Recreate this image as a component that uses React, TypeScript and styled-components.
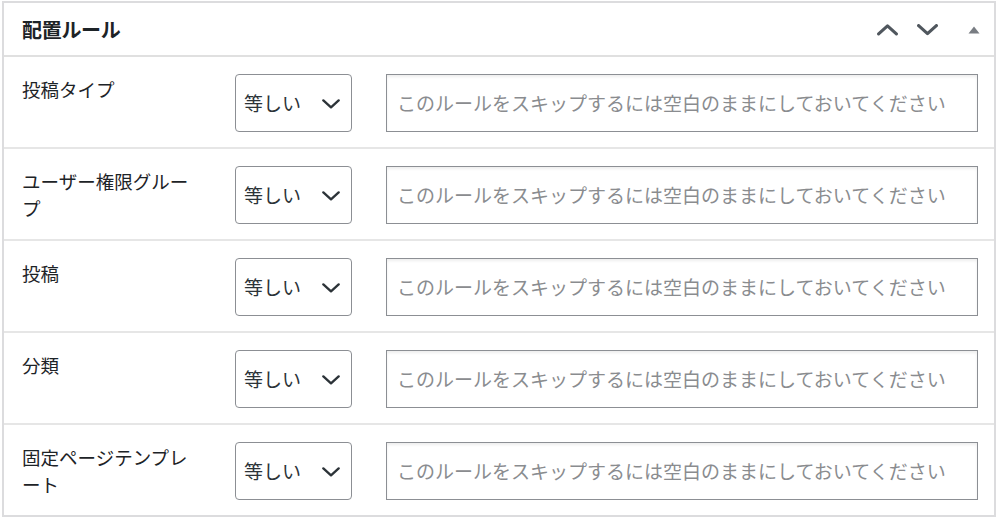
import React from 'react'
import styled, { createGlobalStyle } from 'styled-components'

const rules = [
    '投稿タイプ',
    'ユーザー権限グループ',
    '投稿',
    '分類',
    '固定ページテンプレート',
]

const Global = createGlobalStyle`
    html, body {
        margin: 0;
        padding: 0;
        background: #ffffff;
    }
    body {
        font-family: "Noto Sans CJK JP", "Noto Sans", sans-serif;
        color: #1d2327;
    }
`

const Chevron: React.FC<{ up?: boolean; size?: number; stroke?: number; color?: string }> = ({
    up,
    size = 21,
    stroke = 3,
    color = '#50575e',
}) => (
    <svg width={size} height={size / 2 + 1} viewBox="0 0 20 11" fill="none">
        <path
            d={up ? 'M1.5 9.5 L10 1.8 L18.5 9.5' : 'M1.5 1.5 L10 9.2 L18.5 1.5'}
            stroke={color}
            strokeWidth={stroke}
            strokeLinecap="round"
            strokeLinejoin="round"
        />
    </svg>
)

const App: React.FC = () => {
    return (
        <>
            <Global />
            <Panel>
                <Header>
                    <Title>配置ルール</Title>
                    <Tools>
                        <ToolButton>
                            <Chevron up />
                        </ToolButton>
                        <ToolButton>
                            <Chevron />
                        </ToolButton>
                        <Toggle>
                            <svg width="12" height="8" viewBox="0 0 12 8">
                                <path d="M6 0.5 L11.5 7.5 L0.5 7.5 Z" fill="#787c82" />
                            </svg>
                        </Toggle>
                    </Tools>
                </Header>
                {rules.map((r) => (
                    <Row key={r}>
                        <Label>{r}</Label>
                        <Select>
                            <span>等しい</span>
                            <Chevron size={18} stroke={2.6} color="#2c3338" />
                        </Select>
                        <Field placeholder="このルールをスキップするには空白のままにしておいてください" />
                    </Row>
                ))}
            </Panel>
        </>
    )
}

const Panel = styled.div`
    margin: 1px 4px 0 2px;
    border: 2px solid #dcdcde;
    background: #fff;
`
const Header = styled.div`
    display: flex;
    align-items: center;
    justify-content: space-between;
    height: 52px;
    padding: 0 14px 0 18px;
    border-bottom: 2px solid #e0e0e0;
`
const Title = styled.h2`
    margin: 0;
    font-size: 20px;
    font-weight: 700;
    color: #1d2327;
    letter-spacing: -0.3px;
`
const Tools = styled.div`
    display: flex;
    align-items: center;
    padding-top: 2px;
`
const ToolButton = styled.span`
    display: flex;
    width: 21px;
    margin-right: 19px;
`
const Toggle = styled.span`
    display: flex;
    margin-left: 11px;
    padding-bottom: 1px;
`
const Row = styled.div`
    display: flex;
    align-items: flex-start;
    height: 73px;
    padding: 17px 16px 0 18px;
    border-bottom: 2px solid #e6e6e6;
    &:last-child {
        border-bottom: none;
    }
`
const Label = styled.div`
    flex: 0 0 213px;
    box-sizing: border-box;
    padding: 2px 38px 0 0;
    font-size: 18.5px;
    line-height: 27px;
    color: #1d2327;
`
const Select = styled.div`
    display: flex;
    flex: 0 0 117px;
    align-items: center;
    justify-content: space-between;
    height: 58px;
    box-sizing: border-box;
    padding: 0 11px 0 8px;
    border: 1px solid #8c8f94;
    border-radius: 4px;
    font-size: 19px;
    color: #2c3338;
    span {
        line-height: 1;
        padding-bottom: 2px;
    }
    svg {
        margin-top: 2px;
    }
`
const Field = styled.input`
    flex: 1;
    min-width: 0;
    height: 58px;
    box-sizing: border-box;
    margin: 0 0 0 34px;
    padding: 0 10px 2px;
    border: 1px solid #8c8f94;
    border-radius: 0;
    box-shadow: inset 0 2px 3px rgba(0, 0, 0, 0.07);
    font-family: "Noto Sans CJK JP", "Noto Sans", sans-serif;
    font-size: 19px;
    color: #2c3338;
    background: #fff;
    outline: none;
    &::placeholder {
        color: #8a8c8f;
        opacity: 1;
    }
`

export default App
